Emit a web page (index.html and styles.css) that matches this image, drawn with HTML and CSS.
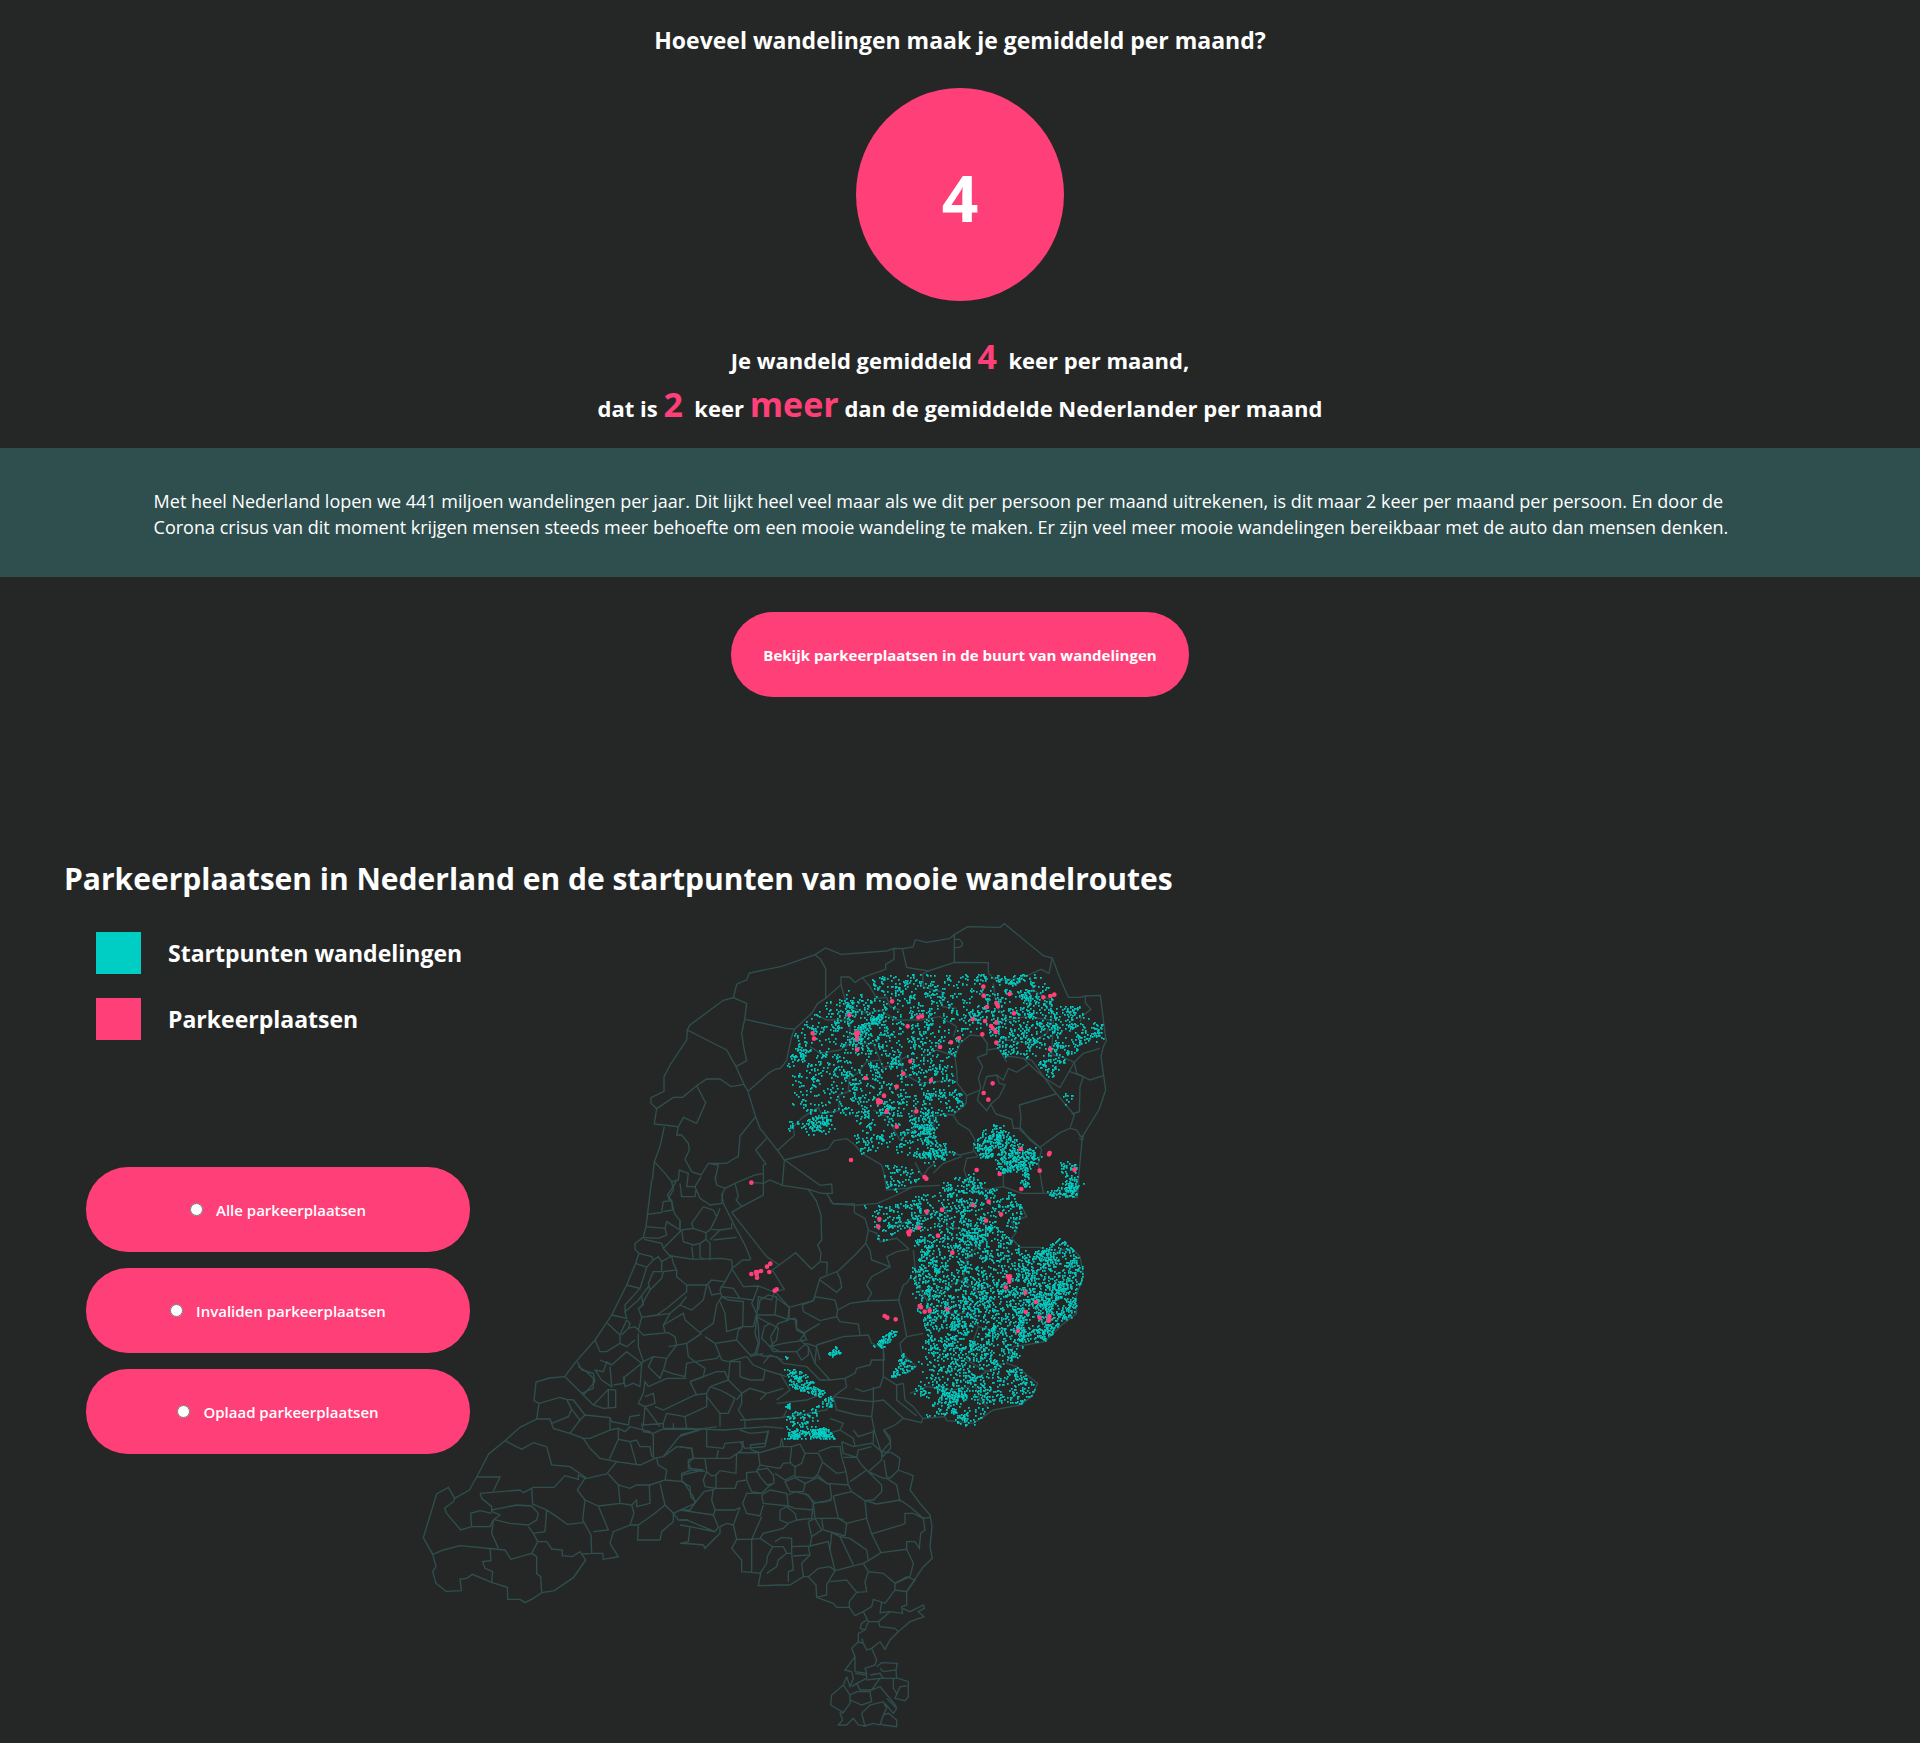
FILE: index.html
```html
<!DOCTYPE html>
<html lang="nl">
<head>
<meta charset="utf-8">
<meta name="viewport" content="width=device-width, initial-scale=1">
<title>Parkeerplaatsen en wandelroutes</title>
<link rel="stylesheet" href="styles.css">
</head>
<body>
<section class="quiz">
  <label class="quiz-title" for="walks">Hoeveel wandelingen maak je gemiddeld per maand?</label>
  <input class="quiz-input" id="walks" type="text" inputmode="numeric" value="4">
  <div class="result">
    <p>Je wandeld gemiddeld <span class="accent">4</span>&nbsp; keer per maand,</p>
    <p>dat is <span class="accent">2</span>&nbsp; keer <span class="accent">meer</span> dan de gemiddelde Nederlander per maand</p>
  </div>
</section>

<section class="intro">
  <p>Met heel Nederland lopen we 441 miljoen wandelingen per jaar. Dit lijkt heel veel maar als we dit per persoon per maand uitrekenen, is dit maar 2 keer per maand per persoon. En door de Corona crisus van dit moment krijgen mensen steeds meer behoefte om een mooie wandeling te maken. Er zijn veel meer mooie wandelingen bereikbaar met de auto dan mensen denken.</p>
</section>

<div class="cta">
  <button class="cta-button" type="button">Bekijk parkeerplaatsen in de buurt van wandelingen</button>
</div>

<section class="parking">
  <h1 class="parking-title">Parkeerplaatsen in Nederland en de startpunten van mooie wandelroutes</h1>
  <div class="parking-body">
    <svg class="map" viewBox="0 0 2280 2520" role="img" aria-label="Kaart van Nederland">
      <g class="borders">
        <!-- Waddeneilanden, Friesland, Groningen, Drenthe -->
        <g transform="translate(1020 30)">
          <path d="M0 218 20 210 28 189 125 169 225 134 257 114 303 133 440 123 462 115 487 116 519 111 526 89 560 97 628 86 643 74 683 50 781 52 793 41 910 137 937 144 958 200 985 262 1020 262 1036 258 1081 256 1097 385 1100 390 1090 410 1083 440 1097 540 1078 597 1027 680 1017 790 1012 862 950 850 910 850"/>
          <path d="M225 134 242 148 257 176 257 265 233 280 215 310 164 357 138 355 16 328M257 265 303 224 303 201 328 201 345 217 367 203 437 178 437 163 462 148 462 115M487 116 500 172 565 183 643 157 745 158 745 190"/>
          <path d="M643 74 643 157M643 88 658 88 667 98 666 108 655 113 643 112M937 144 927 190 903 178 865 195 838 205 770 213 745 190M303 224 316 270 322 310 345 320M367 203 390 230 410 265 440 262 450 290 480 300"/>
          <path d="M565 183 548 192 550 230 580 240 605 245 607 290 650 295M1036 258 1036 278 1053 298 1027 318 1020 335M164 357 155 380 140 450 130 465 120 475 108 477 88 488 25 543M113 721 163 676 160 650 188 622 235 592 245 612 297 602 297 555 325 545 327 505 352 490 380 455 420 450 430 475 500 440"/>
          <path d="M134 750 265 717 282 692 320 686 345 705 365 730 425 765 432 790 440 840 500 835 520 830M134 750 240 826 275 822 277 850 245 850 205 838M260 850 278 880 343 886 412 880 470 855 520 830 600 826"/>
          <path d="M650 480 645 440 660 400 690 375 725 378 742 400 740 432 712 442 728 470 715 505 722 530 712 570 740 602 752 583 768 612 815 628 820 655 843 655 870 690 905 718"/>
          <path d="M650 480 652 520 680 557 720 540M680 557 678 580 640 615 655 640 688 660 705 690 700 720 715 740M742 420 775 415 800 455M770 495 778 520 795 525 778 560 752 583M770 495 740 500 728 540M770 495 790 510 805 475 830 487 865 463"/>
          <path d="M820 440 875 450 940 540 1003 615 990 655 960 668 900 712 840 660 843 620 838 585 948 552M800 440 820 440M940 435 965 440 1003 457 960 533 915 505 880 475 850 445M1003 457 1010 490 1050 510 1090 497M1003 457 1030 430 1080 415"/>
          <path d="M990 485 1030 500 1020 530 1018 605 995 612M990 655 1010 660 1022 680 1030 678 1027 690 1018 685M905 718 895 760 910 850M790 780 790 830 845 850 910 850M715 740 680 745 672 780 690 830 745 838 790 830M580 620 610 612 640 615M580 620 585 690 615 725 660 735 700 725M525 757 548 800 565 775 585 760M580 790 610 760 665 740"/>
          <path d="M330 290 380 310 420 300 470 330 540 330M240 320 260 330 330 330 330 400 300 420 240 430 210 410M420 450 400 400 350 400M540 330 600 320 650 350 640 380M550 440 590 420 650 440M480 440 490 490 540 520 640 510M400 600 440 620 480 690 530 650 520 600M760 220 770 290 800 330 860 320 930 330M870 200 880 240 930 270 935 330 920 370 870 400 800 390M940 330 935 440"/>
        </g>
        <!-- Noord-Holland, IJsselmeer -->
        <g transform="translate(600 180)">
          <path d="M420 68 410 73 400 113 370 121 270 195 262 210 380 270 408 320 432 373 443 392 467 470 480 505 533 572 553 600 547 676M400 113 440 130 434 178 425 220 432 265 440 302 408 320"/>
          <path d="M262 210 260 240 210 315 192 350 192 394 153 413 153 430 170 446 163 492 235 500 250 472 290 490 317 428 290 377 320 357 360 357 393 380 432 373M170 446 220 412 248 412 290 377M467 470 420 528 415 590 395 600 380 610 325 610 303 645 275 635 255 598 268 570 265 550 245 525 230 525 235 500"/>
          <path d="M193 500 180 560 163 605 157 660M163 605 195 640 215 665 235 660 238 630 265 640 260 680 285 680 303 650M215 665 220 690 205 715 215 725 218 750 190 755M240 670 245 710 285 710 288 690M285 680 300 715 330 735 365 730 368 700 375 685 405 670M345 660 355 615 325 610M345 650 350 675 375 685"/>
          <path d="M405 670 415 710 408 720 425 740 395 757M405 670 465 645 490 640M490 615 490 705 425 740M500 535 467 570 498 612 490 615M455 667 490 670 510 660 547 676 625 688 648 722M365 700 370 730 405 800 435 855 453 900M395 757 500 890"/>
        </g>
        <!-- Flevoland, Gelderland, Overijssel -->
        <g transform="translate(1020 900)">
          <path d="M228 0 243 45 245 120 233 135 243 160 240 185 215 207 167 158 118 195 97 210 133 268 105 275M80 170 118 195M270 0 280 12 343 12 343 38 375 55 385 90 377 130 345 165 295 213 240 235 220 302 148 322 105 275M240 185 262 187 260 222M240 240 290 277 305 262 300 235 290 215"/>
          <path d="M377 130 390 150 395 180 450 200 440 170 470 155 508 148M450 200 395 230 380 255 395 280 380 303 480 300M385 90 410 100 420 125 470 115 508 148M220 302 225 290 285 300 293 330 290 350 240 362 190 335 187 315 220 302M293 330 330 310 380 303"/>
          <path d="M290 350 300 365 355 372 360 405M230 435 310 410 385 405 395 430 430 445 433 480 395 480 390 495 350 505 345 520 315 535 320 560 280 590M230 435 225 490 270 540 315 535M430 445 430 530 470 555 490 550M490 255 475 300 485 330 500 410 550 400M490 255 500 250 515 225M500 410 480 430 485 460 530 500M430 530 420 560 370 575 345 565"/>
          <path d="M490 550 495 600 520 620 548 655 545 668 490 655 430 600 400 605 395 650M470 555 470 600 530 648M490 655 465 675 432 690 450 712 452 745 428 770M400 605 400 560M395 650 405 700 428 770"/>
          <path d="M548 655 615 650 620 662 655 665 700 670 760 630 840 615 875 590 893 550 880 540 830 500 800 490 820 440 855 435 915 425 965 375 1010 340 1005 300 1030 225 1020 170 995 145 965 150 940 160 900 142 840 142 815 115 830 95 815 65 860 50 845 20"/>
          <path d="M520 150 530 250 560 300 650 245 670 240 740 300M670 240 680 180 720 130M560 300 570 360 620 340 700 340 715 380 800 400M715 380 680 480 740 515 790 490M740 515 700 540 720 600 745 625M510 580 560 560 640 570 690 560M455 85 530 50 620 30 620 80 680 90"/>
          <path d="M148 322 147 355 170 360 170 385 195 400 180 420 205 440 205 465 185 480 170 455 120 455 100 445 92 410 115 370 147 360M105 275 95 300 55 290 50 350 90 372M50 350 45 400 55 430 45 460 70 468 110 470 130 490M205 440 225 490M130 490 200 500 240 540 270 540M120 520 150 570 110 600"/>
          <path d="M280 590 260 630 180 645 100 655 0 660M280 590 350 600 400 605M280 590 290 630 350 645 395 650M0 690 30 700 85 695 75 740 15 745 0 725M125 715 130 740M265 700 300 690 340 715 345 740M300 690 310 670 270 655M110 610 200 600 250 580"/>
        </g>
        <!-- Utrecht, Zuid-Holland -->
        <g transform="translate(360 840)">
          <path d="M395 0 378 140 370 172 345 190 345 208 357 220 347 250 320 315 275 405 225 480 168 545 134 590M383 103 425 97 430 65 455 62 463 100 480 122 480 150 440 125 435 145 378 140M435 145 440 165 415 175 370 172M372 178 425 190 430 205 450 228M455 62 442 45 460 20 470 0"/>
          <path d="M357 220 395 230 400 240 380 262 347 250M380 262 360 325 320 315M400 240 415 230 425 245 455 228 460 250 470 270 430 275 425 295M425 245 425 275 400 275 385 310 390 330 365 375M425 295 390 330M360 325 315 375 315 395 355 360 385 320M315 395 320 415 275 405M320 420 300 465 262 430M300 465 300 490 260 515 240 515 225 480"/>
          <path d="M470 270 470 290 500 315 500 335 440 385 410 405 365 412 355 385 370 375 365 350M500 315 560 315 575 300 615 305M500 350 480 375 515 390 550 360 560 315M480 375 450 400 365 412 355 450 345 440 325 445 305 465M355 450 370 465 445 458 465 470 470 495 440 535 400 530 370 545 355 500 355 460M320 420 330 430 325 445M345 480 320 500 300 490"/>
          <path d="M450 400 430 435 435 458M430 435 490 400 495 420 540 458 580 430 590 375 605 350 600 330 615 305 637 265 635 240 605 235 520 238 455 228M545 460 500 490 445 500M485 150 430 205M450 228 455 228M515 200 520 238"/>
          <path d="M485 150 490 185 520 195 540 190 558 178 558 158 520 145 485 150M520 145 515 130 550 80 580 90 590 110 570 150 558 158M558 178 570 190 570 240M540 190 540 230 550 238M570 180 600 150 575 148M580 180 650 172M590 110 600 85M600 150 635 145 635 130M637 265 668 240 690 240M480 150 480 122"/>
          <path d="M635 265 670 320 715 318 760 335M600 320 640 325 660 355 700 360 715 318M605 350 660 355M565 315 575 345 600 340M605 350 625 360 670 365 668 440 620 455 615 400 600 365M668 440 700 440 710 400 695 370 700 360M710 405 765 405 770 350 745 345 720 360 715 390M710 405 715 440 718 490 710 520 690 525 650 480 655 450 668 440"/>
          <path d="M765 350 808 382 803 418 765 405M733 440 750 430 775 445 770 480 750 500 725 475 733 440M803 418 825 415 830 450 850 460 860 480 790 490 750 500 760 515 830 515 860 490M850 460 900 430M555 470 585 490 650 480M585 490 605 540 625 545M500 490 505 530 525 545 590 535 600 525M860 490 890 500 900 540"/>
          <path d="M440 535 430 570 455 580 495 590 500 550 525 545 555 565 550 590 510 605M370 545 365 550 360 620M400 530 385 560 420 595 430 570M240 540 275 555 320 515 365 550 315 590 310 610 280 615M275 555 260 545 250 575 225 570 245 600 275 620 270 560M360 620 340 610 315 620 310 590M172 545 185 570 220 580 225 605 190 645"/>
          <path d="M510 605 590 575 615 575 625 600M510 605 530 645M385 620 440 595 500 595M385 620 375 605 370 640 355 670 375 680 405 670 400 640 375 650M405 680 430 690 525 645 560 640 570 620 625 600M440 700 430 730 370 735 375 680M375 680 420 740M440 700 495 710 560 680 560 640M495 710 500 745 430 745M430 730 430 745M460 730 460 745"/>
          <path d="M560 650 600 700 625 700 645 655 620 640 600 630 570 620M625 600 630 545 660 545 660 590 690 600 730 600 735 570 700 555 680 530M625 600 665 640 650 660M665 640 690 625 740 640 720 660 M665 640 665 670 655 690 675 720 790 712 800 690M675 720 675 745M600 700 600 740M500 745 610 750 740 740 790 745M625 545 680 530M735 570 800 590M740 640 790 625M730 520 690 530M730 550 750 525 790 540"/>
        </g>
        <!-- Zeeland, West-Brabant -->
        <g transform="translate(30 1350)">
          <path d="M465 80 418 84 378 96 372 152 387 160 380 207 330 232 285 272 236 312 200 381 178 420 134 445 115 412 80 432 40 563 68 613 78 650 68 665 78 700 108 724 154 722 150 687 170 685 187 673 245 697 292 712 293 748 330 748 345 758 370 745 395 728 433 722 490 683 527 630 510 605 487 620 457 617 457 600 425 597 410 575 383 575 365 610 303 628 285 600 150 587 100 600 68 613"/>
          <path d="M134 445 130 455 104 475 110 490 152 540 185 530 240 530 250 510M200 381 270 381 250 424M210 430 330 420 340 428 370 412 432 412 465 377 505 388 505 375 527 386 590 372 620 335 690 345 735 325M210 430 215 445 245 470 245 485 270 495 250 510M245 480 320 465 365 468 385 490 380 510 355 525 300 520 250 508M365 415 368 462 410 480 405 545 370 550 355 530M410 480 440 500 472 523 520 518"/>
          <path d="M185 530 182 490 210 482 245 490M250 510 245 550 265 595M370 550 383 575M365 610 380 620 380 670 392 680 395 728M240 595 243 632 218 635 225 655 248 665 245 697M285 272 335 298 370 278 410 290 425 345 480 350 527 382 502 420 525 450 518 510 543 555 545 610 515 612"/>
          <path d="M387 160 450 142 470 148M380 207 420 207 430 235 480 250 520 265 540 295 570 325 620 335M425 220 475 200 485 178 470 148 455 145M485 178 510 210 480 250M470 148 490 150 525 195 600 203 600 240 540 265 520 265M510 210 525 195M465 80 515 130 550 165 580 175 617 172 617 120 595 118 550 165M595 118 595 172M515 130 550 115 550 85 530 65 505 50"/>
          <path d="M598 328 625 268 660 275 670 310 680 345M600 240 625 235 625 268M625 235 645 245 660 230 720 245 730 255 730 325M660 275 680 270 690 290 720 290 725 320M600 203 605 215 655 225 660 200 690 195M695 220 700 245 730 250 755 238 865 238 920 230M730 325 760 320 808 260 865 240"/>
          <path d="M740 325 745 345 770 360 765 390 720 405 680 405 660 415 625 405 595 372M625 405 630 460 565 468 525 450M630 460 665 465 680 450 680 470 720 460 718 405M565 468 595 540 550 545M665 465 672 490 660 525 610 545 600 580 625 620 580 628 578 610 545 610M660 525 685 525 683 570 750 570 755 545 790 515 790 490 765 465 735 490 685 525M765 465 750 400"/>
          <path d="M765 390 820 395 850 440 855 460 790 490 805 510 835 510M815 395 815 375 880 360M760 320 800 290 845 295 850 325M835 330 835 355 880 360M850 325 835 330"/>
        </g>
        <!-- Oost-Brabant, Limburg -->
        <g transform="translate(840 1590)">
          <path d="M80 0 80 50 130 55 135 40 190 35 185 60 165 75M115 60 110 85M0 50 35 55 40 85M0 15 60 0M210 45 255 40 265 0M210 45 215 60 240 68M305 25 300 50 240 68 175 68 150 85 40 85 25 100 35 120 75 125M75 85 80 125 95 138 108 135 108 175 75 170 70 150 80 125M108 135 120 122 168 130 170 70M108 175 165 175 172 155 200 150"/>
          <path d="M5 130 35 120M5 130 5 155 30 170 32 200 48 215 30 240 0 240M48 215 72 185 95 180 108 175M100 178 95 210 105 240 165 240 180 232M105 240 100 255 0 240M100 255 115 290 105 305 30 290 0 285M0 270 20 270 105 305M30 290 25 335 0 340 40 342 70 345 75 355 120 310 120 290 140 280 160 285"/>
          <path d="M175 68 235 68 240 105 230 125 200 128 200 150 215 185 245 190 265 170 280 160M230 120 262 115 280 135 282 160 262 165 240 140 230 120M240 105 300 115 310 100 335 98M300 50 335 50 330 98 345 110M335 50 360 42 375 70 365 100 345 110 345 135 315 150 285 130M375 70 415 70 428 95 412 135M345 140 400 145 412 135 440 160 505 165 498 125 470 130 430 98"/>
          <path d="M415 65 455 50 480 50 485 80 498 125M485 35 490 70 530 82 545 105 560 120M490 82 530 82M485 35 520 50 575 40 605 65 605 90 565 125M530 82 535 60 575 50M605 65 635 68 660 85 655 120 630 145 620 140 612 90M520 0 535 20 580 5M580 0 580 40M610 0 632 35 605 65M655 120 700 137 690 180 720 220 750 255 756 290 750 350 757 385 730 410 700 455 680 485"/>
          <path d="M345 143 375 160 370 185 330 185 315 155 345 143M375 160 412 143 450 165 455 205 440 215 405 218 375 190M505 165 515 185 460 198M515 185 555 212 560 265 500 280M460 198 475 265 500 280 495 318M510 155 560 120 605 165 605 185 580 210 555 212M565 125 610 145 620 145 650 165 660 215M555 212 590 222 660 210 690 230 730 265M750 262 730 265 735 300 722 310 718 355 705 335 680 335 680 358"/>
          <path d="M560 265 575 312 665 285 675 280 675 250 700 250 730 265M575 312 603 368 565 392 550 400 465 422M603 368 680 358 700 400 690 440 645 460M400 220 405 265 425 265 430 300 495 318M385 275 405 265 425 300 395 320 385 275M400 220 455 210M425 265 475 265 490 270M395 320 390 350"/>
          <path d="M455 308 480 320 520 405M480 320 510 325 560 360 565 392M455 308 450 360 465 422M245 195 250 220 325 228 320 190 270 180 245 195M325 228 345 235 400 240M325 195 345 185 385 195 400 220 395 265 350 270M245 190 200 190 188 220 200 250 240 258 250 225M180 232 160 285 170 328 215 328 245 260M300 240 320 230 345 250 350 270 325 280 300 270 300 240M325 280 310 295 250 310 240 325 215 328"/>
          <path d="M170 328 155 355 185 390 185 425 215 427 215 328M215 427 242 430 235 467 295 465 330 465 370 440 385 440M240 325 270 345 278 350 262 380 260 400 240 430M278 350 310 350 320 370 335 370 335 325 305 322 285 335M320 370 295 390 290 410 260 430M335 370 340 420 325 425 325 455M335 350 390 348 445 335 450 360M340 378 390 375 385 350M390 375 365 400 370 440M385 440 408 465 410 502 460 520 470 532 508 532"/>
          <path d="M385 440 415 415 450 410 465 422 440 465 440 495 410 502M450 455 500 450 530 487 508 515 508 532 525 557 550 545M550 400 565 425 555 455 560 485 530 487M565 425 610 430 645 460 645 480 615 520 580 508 575 530 550 545M645 460 680 440 705 450 680 485 645 480M680 485 680 525 665 530 668 550 630 545 600 548 605 518"/>
          <path d="M668 535 690 545 730 525 733 535 715 545 732 560 690 575 655 605 645 595 600 590 595 575 630 545M595 575 565 575 550 545M565 575 555 600 540 595 545 580 560 570M555 600 535 610 535 635 550 640 560 660 575 655 600 635 615 658 630 630 655 605M535 635 515 655 525 680 525 725M550 640 545 625M575 655 590 690 585 705 555 715 560 730 525 725M525 680 495 720 515 725M590 710 605 698 652 700 648 720 610 725 600 715"/>
          <path d="M648 720 650 745 610 745 600 730 570 735M515 725 520 745 510 770 500 740M525 730 560 735 560 745 530 760 515 770M500 740 490 765 455 795 452 825 490 848 510 820 510 795 490 765M530 760 540 780 575 780 600 745 560 750M510 795 530 785 570 785 575 815 545 825 510 810M575 780 600 770 650 830M600 745 655 745 685 755 685 800 675 812 645 805 660 770 680 768M640 745 640 775 650 790"/>
          <path d="M490 848 480 850 488 870 475 885 500 885 520 865 535 885 555 888 545 850 570 825 610 815 620 835 610 855 600 885 580 880 555 888M610 855 625 850 650 870 650 890 610 885 600 880M615 820 640 850 650 835 620 805"/>
        </g>
      </g>
      <path class="walks" id="walk-points"></path>
      <path class="spots" id="parking-points"></path>
    </svg>
    <div class="controls">
      <ul class="legend">
        <li><span class="swatch swatch-walks"></span>Startpunten wandelingen</li>
        <li><span class="swatch swatch-spots"></span>Parkeerplaatsen</li>
      </ul>
      <div class="filters">
        <label class="filter"><input type="radio" name="filter" value="all"><span>Alle parkeerplaatsen</span></label>
        <label class="filter"><input type="radio" name="filter" value="disabled"><span>Invaliden parkeerplaatsen</span></label>
        <label class="filter"><input type="radio" name="filter" value="charging"><span>Oplaad parkeerplaatsen</span></label>
      </div>
    </div>
  </div>
</section>
<script src="map.js"></script>
</body>
</html>
```
FILE: map.js
```js
// Areas with walking routes: outline of the area and the number of starting points in it.
const areas = [
  [2050, [[395,200],[560,185],[600,190],[745,190],[745,370],[690,370],[655,400],[640,440],[650,520],[680,570],[640,610],[580,630],[590,700],[570,750],[440,720],[370,740],[340,690],[340,650],[290,610],[260,650],[215,685],[165,660],[140,665],[150,600],[160,540],[135,480],[140,430],[155,370],[215,315],[260,270],[330,260],[370,230]]],
  [850, [[745,190],[840,188],[905,195],[935,250],[960,290],[1030,280],[1035,320],[1095,345],[1090,385],[1040,410],[990,440],[960,470],[930,515],[890,460],[820,430],[790,440],[760,400],[745,370]]],
  [430, [[735,640],[800,645],[830,690],[890,725],[900,760],[860,780],[770,790],[760,740],[720,745],[700,700]]],
  [120, [[960,735],[1010,760],[1015,860],[940,860],[915,845],[985,820],[960,780]]],
  [35, [[845,780],[865,790],[868,830],[840,825]]],
  [70, [[430,760],[530,770],[540,810],[470,845],[430,830]]],
  [10, [[955,540],[1000,550],[1000,590],[975,590]]],
  [520, [[610,805],[690,795],[720,830],[830,845],[845,900],[830,960],[690,990],[640,980],[560,960],[470,960],[460,870],[600,840]]],
  [70, [[370,885],[470,880],[500,960],[415,1000],[400,950]]],
  [2300, [[510,980],[640,960],[760,940],[840,1010],[830,1170],[860,1300],[830,1350],[850,1390],[895,1415],[860,1480],[780,1475],[700,1545],[650,1545],[640,1510],[550,1520],[580,1470],[510,1450],[540,1410],[530,1350],[560,1270],[520,1170],[500,1090],[530,1050]]],
  [1000, [[840,1020],[910,1015],[960,980],[1020,1040],[1030,1095],[1005,1160],[1015,1210],[960,1245],[915,1290],[830,1300],[820,1170],[830,1070]]],
  [75, [[392,1305],[450,1260],[478,1258],[430,1312]]],
  [40, [[260,1332],[285,1308],[302,1325],[275,1342]]],
  [80, [[450,1400],[485,1325],[530,1370],[480,1395]]],
  [6, [[134,1338],[140,1338],[145,1352]]],
  [160, [[132,1375],[180,1378],[255,1445],[240,1460],[150,1430]]],
  [22, [[132,1490],[148,1475],[148,1495]]],
  [34, [[220,1490],[270,1450],[282,1490]]],
  [75, [[135,1510],[228,1490],[232,1550],[135,1560]]],
  [230, [[130,1584],[150,1562],[260,1550],[284,1585]]]
];

// Dense spots: centre x, centre y, spread x, spread y, number of points.
const clusters = [
  [560,660,14,20,80],[585,725,22,16,90],[445,592,9,9,35],[235,640,20,13,70],[410,325,12,9,30],
  [350,375,12,16,40],[840,750,24,16,90],[690,980,22,26,70],[640,1460,14,14,50],[910,1040,16,14,60],
  [730,1160,30,26,80],[960,1135,20,14,60],[690,830,24,18,60],[330,290,10,22,30],[990,825,14,16,40]
];

const parking = [
  [730,230],[731,257],[456,274],[328,315],[535,322],[546,319],[503,349],[218,370],[222,386],[348,369],[354,368],[351,374],[351,387],
  [351,419],[769,279],[774,289],[741,291],[809,252],[822,310],[910,262],[931,258],[943,254],[698,328],[735,333],
  [769,338],[753,348],[758,355],[767,366],[727,373],[769,398],[657,385],[633,397],[600,411],[511,454],[490,491],
  [377,504],[573,511],[470,530],[432,557],[414,571],[415,578],[423,576],[440,605],[529,604],[470,650],[758,520],
  [731,549],[745,569],[842,717],[927,733],[929,729],[930,418],[899,782],[1003,779],[844,837],[710,780],[779,792],
  [554,801],[559,806],[333,750],[34,818],[746,875],[699,885],[606,899],
  [418,927],[415,950],[560,905],[783,913],[738,932],[537,953],[505,967],[507,973],[511,963],[594,977],[637,1028],
  [803,1100],[810,1099],[808,1107],[808,1115],[797,1132],[856,1148],[888,1176],[857,1206],[899,1223],[928,1218],[926,1232],
  [928,1224],[834,1263],[539,1188],[543,1192],[554,1205],[569,1202],[622,1198],[434,1218],[442,1223],[467,1228],
  [34,1092],[48,1086],[52,1086],[50,1094],[51,1103],[63,1083],[81,1070],[91,1061],[88,1086],[104,1142],[110,1138]
];

const offset = [1020, 30];

let seed = 20201;
function random() {
  seed = (seed * 16807) % 2147483647;
  return seed / 2147483647;
}

function inside(x, y, shape) {
  let hit = false;
  for (let i = 0, j = shape.length - 1; i < shape.length; j = i++) {
    const [ax, ay] = shape[i];
    const [bx, by] = shape[j];
    if ((ay > y) !== (by > y) && x < (bx - ax) * (y - ay) / (by - ay) + ax) hit = !hit;
  }
  return hit;
}

function dot(x, y) {
  const px = Math.round((x + offset[0]) / 3) * 3;
  const py = Math.round((y + offset[1]) / 3) * 3;
  return `M${px} ${py}h5v5h-5z`;
}

let walks = '';
for (const [count, shape] of areas) {
  const xs = shape.map(p => p[0]);
  const ys = shape.map(p => p[1]);
  const left = Math.min(...xs), top = Math.min(...ys);
  const width = Math.max(...xs) - left, height = Math.max(...ys) - top;
  const placed = [];
  while (placed.length < count) {
    let x, y;
    if (placed.length > 40 && random() < 0.35) {
      // Routes often start close to one another.
      const near = placed[Math.floor(random() * placed.length)];
      x = near[0] + (random() - 0.5) * 24;
      y = near[1] + (random() - 0.5) * 24;
    } else {
      x = left + random() * width;
      y = top + random() * height;
    }
    if (inside(x, y, shape)) placed.push([x, y]);
  }
  for (const [x, y] of placed) walks += dot(x, y);
}
for (const [cx, cy, sx, sy, count] of clusters) {
  for (let i = 0; i < count; i++) {
    const x = cx + (random() + random() + random() - 1.5) * 2 * sx;
    const y = cy + (random() + random() + random() - 1.5) * 2 * sy;
    walks += dot(x, y);
  }
}
document.getElementById('walk-points').setAttribute('d', walks);

const spots = parking.map(([x, y]) =>
  `M${x + offset[0] - 7} ${y + offset[1]}a7 7 0 1 0 14 0a7 7 0 1 0 -14 0`).join('');
document.getElementById('parking-points').setAttribute('d', spots);
```
FILE: styles.css
```css
* {
  box-sizing: border-box;
}

body {
  margin: 0;
  background: #252726;
  color: #fff;
  font-family: "Open Sans", "Noto Sans", sans-serif;
  font-size: 18px;
  line-height: 26px;
}

p,
h1,
ul {
  margin: 0;
  padding: 0;
}

.quiz {
  display: flex;
  flex-direction: column;
  align-items: center;
  padding: 24px 16px 16px;
  font-weight: 700;
  text-align: center;
}

.quiz-title {
  font-size: 23px;
  line-height: 32px;
}

.quiz-input {
  width: 208px;
  height: 213px;
  margin: 32px 0 35px;
  padding: 6px 0 0;
  border: 0;
  border-radius: 50%;
  background: #ff3f78;
  color: #fff;
  font: 700 64px "Open Sans", "Noto Sans", sans-serif;
  text-align: center;
}

.result {
  font-size: 22px;
  line-height: 48px;
}

.accent {
  color: #ff3f78;
  font-size: 34px;
  line-height: 32px;
}

.intro {
  padding: 40px 8% 37px;
  background: #2f4f4f;
}

.cta {
  display: flex;
  justify-content: center;
  padding: 35px 16px 0;
}

.cta-button {
  height: 85px;
  padding: 0 32px;
  border: 0;
  border-radius: 42px;
  background: #ff3f78;
  color: #fff;
  font: 700 15px "Open Sans", "Noto Sans", sans-serif;
  cursor: pointer;
}

.parking {
  padding-top: 160px;
}

.parking-title {
  padding-left: 64px;
  font-size: 30px;
  line-height: 43px;
}

.parking-body {
  display: grid;
  grid-template-columns: 400px 70px 1fr;
}

.controls {
  grid-area: 1 / 1 / 2 / 3;
  padding: 32px 0 0 86px;
}

.legend {
  display: grid;
  gap: 24px;
  padding-left: 10px;
  font-size: 23px;
  font-weight: 700;
  list-style: none;
}

.legend li {
  display: flex;
  align-items: center;
  gap: 27px;
}

.swatch {
  width: 45px;
  height: 42px;
}

.swatch-walks {
  background: #00cec4;
}

.swatch-spots {
  background: #ff3f78;
}

.filters {
  display: grid;
  gap: 16px;
  margin-top: 127px;
}

.filter {
  display: flex;
  align-items: center;
  justify-content: center;
  gap: 13px;
  height: 85px;
  border-radius: 42px;
  background: #ff3f78;
  font-size: 15px;
  font-weight: 600;
  cursor: pointer;
}

.filter input {
  width: 13px;
  height: 13px;
  margin: 0;
}

.map {
  grid-area: 1 / 2 / 2 / 4;
  width: 100%;
  max-width: 760px;
}

.borders {
  fill: none;
  stroke: #2f4f4f;
  stroke-width: 4;
}

.walks {
  fill: #00cec4;
}

.spots {
  fill: #ff3f78;
}
```
